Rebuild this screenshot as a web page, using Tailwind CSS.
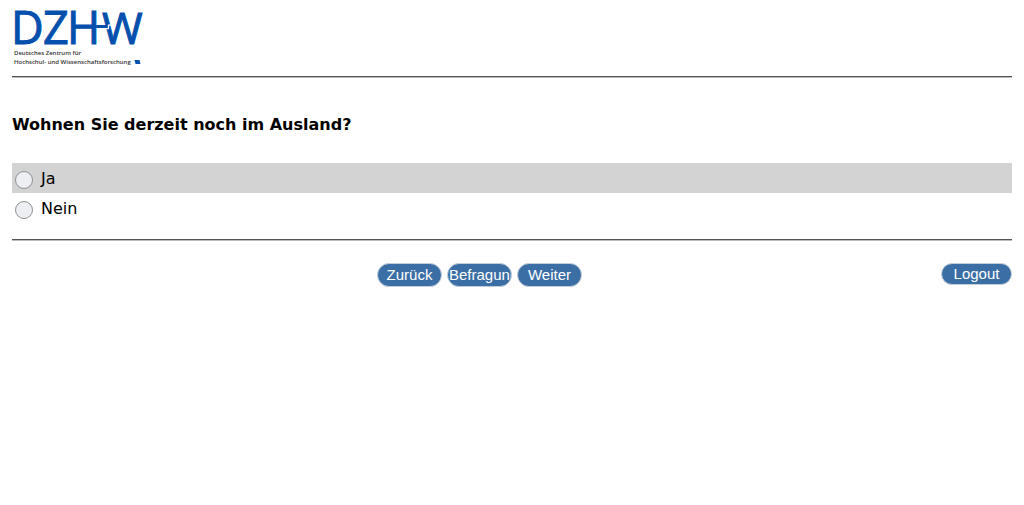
<!DOCTYPE html>
<html lang="de">
<head>
<meta charset="utf-8">
<meta name="viewport" content="width=device-width, initial-scale=1">
<title>DZHW Befragung</title>
<script src="https://cdn.jsdelivr.net/npm/@tailwindcss/browser@4"></script>
</head>
<body class="bg-white px-3 font-['DejaVu_Sans',sans-serif] text-base text-black">
<header class="border-b border-[#555] pt-2 pb-2 shadow-[0_1px_0_#bbb]">
<svg class="block overflow-visible" width="136" height="60" viewBox="12 8 136 60" role="img" aria-label="DZHW Deutsches Zentrum für Hochschul- und Wissenschaftsforschung">
<g fill="#0650ad" stroke="#0650ad" stroke-width="1" font-family="Open Sans, sans-serif" font-size="45">
<text x="11" y="44">D</text><text x="43" y="44">Z</text><text x="67" y="44">H</text><text x="102" y="44" font-size="44">W</text>
</g>
<path d="M94 25h13v3H94z" fill="#0650ad"/>
<path d="M102 28.700h6.500v-3.500h4" fill="none" stroke="#fff" stroke-width="1.2"/>
<g fill="#333" font-family="Open Sans, sans-serif" font-size="6" font-weight="600">
<text x="14" y="55">Deutsches Zentrum für</text><text x="14" y="64">Hochschul- und Wissenschaftsforschung</text>
</g>
<path d="M134.500 60h5l1 4h-5z" fill="#0650ad"/>
</svg>
</header>
<main>
<form>
<fieldset class="border-b border-[#555] pt-9 pb-4 shadow-[0_1px_0_#bbb]">
<legend class="float-left mb-[26px] w-full text-base font-bold">Wohnen Sie derzeit noch im Ausland?</legend>
<div class="clear-both">
<label class="flex h-[30px] items-center gap-2 bg-[#d3d3d3] pl-[3px]"><input type="radio" name="ausland" class="mt-1 size-[18px] appearance-none rounded-full border border-[#8d9194] bg-[#eeeff2] checked:border-4"><span class="pt-0.5">Ja</span></label>
<label class="flex h-[30px] items-center gap-2 pl-[3px]"><input type="radio" name="ausland" class="mt-1 size-[18px] appearance-none rounded-full border border-[#8d9194] bg-[#eeeff2] checked:border-4"><span class="pt-0.5">Nein</span></label>
</div>
</fieldset>
<div class="grid grid-cols-[1fr_auto_1fr] pt-[23px] font-['Liberation_Sans',sans-serif] text-[15px] text-white">
<div class="col-start-2 flex gap-[5px] pr-[65px]">
<button type="button" class="flex h-6 w-[65px] items-center justify-center overflow-hidden rounded-full border border-[#c5ced8] bg-[#3a6ea5]">Zurück</button>
<button type="button" class="flex h-6 w-[65px] items-center justify-start overflow-hidden rounded-full border border-[#c5ced8] bg-[#3a6ea5] pl-px">Befragung</button>
<button type="button" class="flex h-6 w-[65px] items-center justify-center overflow-hidden rounded-full border border-[#c5ced8] bg-[#3a6ea5]">Weiter</button>
</div>
<button type="button" class="h-[22px] w-[71px] justify-self-end rounded-full border border-[#c5ced8] bg-[#3a6ea5] leading-5">Logout</button>
</div>
</form>
</main>
</body>
</html>
